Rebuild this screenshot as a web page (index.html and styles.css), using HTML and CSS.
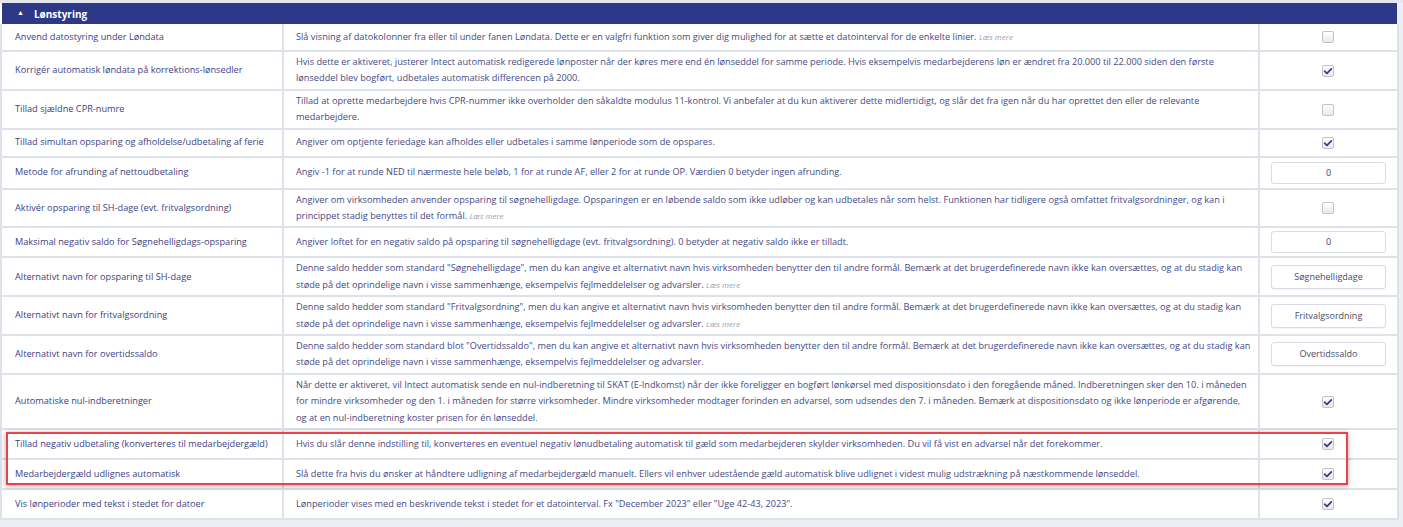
FILE: index.html
```html
<!DOCTYPE html>
<html lang="da">
<head>
<meta charset="utf-8">
<title>Lønstyring</title>
<link rel="stylesheet" href="styles.css">
</head>
<body>
<div class="page">
  <section class="panel">
    <div class="panel-head"><span class="caret">&#9650;</span><span class="panel-title">Lønstyring</span></div>
    <table class="settings">
      <colgroup><col class="c1"><col class="c2"><col class="c3"></colgroup>
      <tbody>
        <tr class="r28">
          <td class="name">Anvend datostyring under Løndata</td>
          <td class="desc">Slå visning af datokolonner fra eller til under fanen Løndata. Dette er en valgfri funktion som giver dig mulighed for at sætte et datointerval for de enkelte linier. <em class="more">Læs mere</em></td>
          <td class="ctl"><span class="cb"></span></td>
        </tr>
        <tr>
          <td class="name">Korrigér automatisk løndata på korrektions-lønsedler</td>
          <td class="desc">Hvis dette er aktiveret, justerer Intect automatisk redigerede lønposter når der køres mere end én lønseddel for samme periode. Hvis eksempelvis medarbejderens løn er ændret fra 20.000 til 22.000 siden den første lønseddel blev bogført, udbetales automatisk differencen på 2000.</td>
          <td class="ctl"><span class="cb on"><svg viewBox="0 0 12 12"><path d="M2.6 6.2 L4.9 8.3 L9.4 3.9" /></svg></span></td>
        </tr>
        <tr>
          <td class="name">Tillad sjældne CPR-numre</td>
          <td class="desc">Tillad at oprette medarbejdere hvis CPR-nummer ikke overholder den såkaldte modulus 11-kontrol. Vi anbefaler at du kun aktiverer dette midlertidigt, og slår det fra igen når du har oprettet den eller de relevante medarbejdere.</td>
          <td class="ctl"><span class="cb"></span></td>
        </tr>
        <tr class="r28">
          <td class="name">Tillad simultan opsparing og afholdelse/udbetaling af ferie</td>
          <td class="desc">Angiver om optjente feriedage kan afholdes eller udbetales i samme lønperiode som de opspares.</td>
          <td class="ctl"><span class="cb on"><svg viewBox="0 0 12 12"><path d="M2.6 6.2 L4.9 8.3 L9.4 3.9" /></svg></span></td>
        </tr>
        <tr class="r32">
          <td class="name">Metode for afrunding af nettoudbetaling</td>
          <td class="desc">Angiv -1 for at runde NED til nærmeste hele beløb, 1 for at runde AF, eller 2 for at runde OP. Værdien 0 betyder ingen afrunding.</td>
          <td class="ctl"><span class="field">0</span></td>
        </tr>
        <tr>
          <td class="name">Aktivér opsparing til SH-dage (evt. fritvalgsordning)</td>
          <td class="desc">Angiver om virksomheden anvender opsparing til søgnehelligdage. Opsparingen er en løbende saldo som ikke udløber og kan udbetales når som helst. Funktionen har tidligere også omfattet fritvalgsordninger, og kan i princippet stadig benyttes til det formål. <em class="more">Læs mere</em></td>
          <td class="ctl"><span class="cb"></span></td>
        </tr>
        <tr>
          <td class="name">Maksimal negativ saldo for Søgnehelligdags-opsparing</td>
          <td class="desc">Angiver loftet for en negativ saldo på opsparing til søgnehelligdage (evt. fritvalgsordning). 0 betyder at negativ saldo ikke er tilladt.</td>
          <td class="ctl"><span class="field">0</span></td>
        </tr>
        <tr>
          <td class="name">Alternativt navn for opsparing til SH-dage</td>
          <td class="desc">Denne saldo hedder som standard "Søgnehelligdage", men du kan angive et alternativt navn hvis virksomheden benytter den til andre formål. Bemærk at det brugerdefinerede navn ikke kan oversættes, og at du stadig kan støde på det oprindelige navn i visse sammenhænge, eksempelvis fejlmeddelelser og advarsler. <em class="more">Læs mere</em></td>
          <td class="ctl"><span class="btn">Søgnehelligdage</span></td>
        </tr>
        <tr>
          <td class="name">Alternativt navn for fritvalgsordning</td>
          <td class="desc">Denne saldo hedder som standard "Fritvalgsordning", men du kan angive et alternativt navn hvis virksomheden benytter den til andre formål. Bemærk at det brugerdefinerede navn ikke kan oversættes, og at du stadig kan støde på det oprindelige navn i visse sammenhænge, eksempelvis fejlmeddelelser og advarsler. <em class="more">Læs mere</em></td>
          <td class="ctl"><span class="btn">Fritvalgsordning</span></td>
        </tr>
        <tr>
          <td class="name">Alternativt navn for overtidssaldo</td>
          <td class="desc">Denne saldo hedder som standard blot "Overtidssaldo", men du kan angive et alternativt navn hvis virksomheden benytter den til andre formål. Bemærk at det brugerdefinerede navn ikke kan oversættes, og at du stadig kan støde på det oprindelige navn i visse sammenhænge, eksempelvis fejlmeddelelser og advarsler.</td>
          <td class="ctl"><span class="btn">Overtidssaldo</span></td>
        </tr>
        <tr>
          <td class="name">Automatiske nul-indberetninger</td>
          <td class="desc">Når dette er aktiveret, vil Intect automatisk sende en nul-indberetning til SKAT (E-Indkomst) når der ikke foreligger en bogført lønkørsel med dispositionsdato i den foregående måned. Indberetningen sker den 10. i måneden for mindre virksomheder og den 1. i måneden for større virksomheder. Mindre virksomheder modtager forinden en advarsel, som udsendes den 7. i måneden. Bemærk at dispositionsdato og ikke lønperiode er afgørende, og at en nul-indberetning koster prisen for én lønseddel.</td>
          <td class="ctl"><span class="cb on"><svg viewBox="0 0 12 12"><path d="M2.6 6.2 L4.9 8.3 L9.4 3.9" /></svg></span></td>
        </tr>
        <tr>
          <td class="name">Tillad negativ udbetaling (konverteres til medarbejdergæld)</td>
          <td class="desc">Hvis du slår denne indstilling til, konverteres en eventuel negativ lønudbetaling automatisk til gæld som medarbejderen skylder virksomheden. Du vil få vist en advarsel når det forekommer.</td>
          <td class="ctl"><span class="cb on"><svg viewBox="0 0 12 12"><path d="M2.6 6.2 L4.9 8.3 L9.4 3.9" /></svg></span></td>
        </tr>
        <tr>
          <td class="name">Medarbejdergæld udlignes automatisk</td>
          <td class="desc">Slå dette fra hvis du ønsker at håndtere udligning af medarbejdergæld manuelt. Ellers vil enhver udestående gæld automatisk blive udlignet i videst mulig udstrækning på næstkommende lønseddel.</td>
          <td class="ctl"><span class="cb on"><svg viewBox="0 0 12 12"><path d="M2.6 6.2 L4.9 8.3 L9.4 3.9" /></svg></span></td>
        </tr>
        <tr>
          <td class="name">Vis lønperioder med tekst i stedet for datoer</td>
          <td class="desc">Lønperioder vises med en beskrivende tekst i stedet for et datointerval. Fx "December 2023" eller "Uge 42-43, 2023".</td>
          <td class="ctl"><span class="cb on"><svg viewBox="0 0 12 12"><path d="M2.6 6.2 L4.9 8.3 L9.4 3.9" /></svg></span></td>
        </tr>
      </tbody>
    </table>
  </section>
  <div class="highlight"></div>
</div>
</body>
</html>
```
FILE: styles.css
```css
html, body {
  margin: 0;
  padding: 0;
  background: #eceef4;
  font-family: "Open Sans", "Noto Sans", "Liberation Sans", sans-serif;
}

.page {
  position: relative;
  padding: 3px 6px 0 0;
  background: linear-gradient(#e4e7ee, #e4e7ee) top left / 100% 3px no-repeat, #eceef4;
}

.panel {
  width: 1397px;
  background: #fff;
}

.panel-head {
  margin-left: 2px;
  height: 21px;
  background: #2d3987;
  color: #fff;
  display: flex;
  align-items: center;
  font-size: 10px;
  font-weight: 700;
}

.caret {
  font-size: 7px;
  margin-left: 15px;
  margin-right: 10px;
  position: relative;
  top: -1px;
}

.settings {
  width: 1397px;
  border-collapse: collapse;
  table-layout: fixed;
  font-size: 9.2px;
  line-height: 16.4px;
  color: #3b3f80;
  background: #fff;
}

.c1 { width: 282px; }
.c2 { width: 976px; }
.c3 { width: 139px; }

.settings td {
  border: 2px solid #dde1ea;
  border-top: 0;
  padding: 2px 12px 2px 12px;
  vertical-align: middle;
}

.settings td.name {
  padding-left: 13px;
  color: #3d4282;
}

.settings td.desc {
  padding-right: 6px;
  color: #454a84;
}

.settings td.ctl {
  height: 24px;
  text-align: center;
  padding: 2px 12px 2px 11px;
}

.settings tr.r28 td.ctl {
  height: 22px;
}

.settings tr.r32 td.ctl {
  height: 26px;
}

.more {
  display: inline-block;
  font-size: 8px;
  line-height: 1;
  color: #9a9cb0;
  font-style: italic;
}

.cb {
  display: inline-block;
  width: 10px;
  height: 10px;
  border: 1px solid #c2c4cb;
  border-radius: 2px;
  background: linear-gradient(#ffffff, #e9e9ec);
  vertical-align: middle;
  position: relative;
}

.cb svg {
  position: absolute;
  left: -1px;
  top: -1px;
  width: 12px;
  height: 12px;
}

.cb svg path {
  fill: none;
  stroke: #2f3a88;
  stroke-width: 1.7;
  stroke-linecap: round;
  stroke-linejoin: round;
}

.field,
.btn {
  display: block;
  width: 113px;
  height: 20px;
  line-height: 20px;
  margin: 0 auto;
  border: 1px solid #d9dce5;
  border-radius: 3px;
  background: #fff;
  font-size: 9px;
  color: #3d4282;
  text-align: center;
}

.btn {
  height: 22px;
  line-height: 22px;
  color: #4a4d66;
  box-shadow: 0 1px 1px rgba(0, 0, 0, 0.05);
}

.highlight {
  position: absolute;
  left: 6px;
  top: 432px;
  width: 1338px;
  height: 49px;
  border: 2px solid #e6434a;
  box-shadow: 0 1px 5px rgba(0, 0, 0, 0.35);
  pointer-events: none;
}
```
